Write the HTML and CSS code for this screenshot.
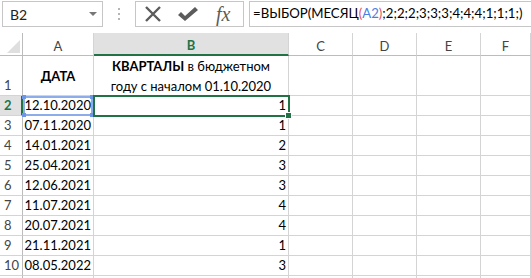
FILE: index.html
```html
<!DOCTYPE html>
<html>
<head>
  <meta charset="UTF-8">
  <link rel="stylesheet" href="styles.css">
  <title>ВЫБОР МЕСЯЦ</title>
</head>
<body>
<div class="fbar">
  <div class="namebox"><span>B2</span><span class="dd"></span></div>
  <div class="dots"><i></i><i></i><i></i></div>
  <div class="btns">
    <svg class="ico" width="18" height="18" viewBox="0 0 18 18"><path d="M2 2 L16 16 M16 2 L2 16" stroke="#5c5c5c" stroke-width="2.4" fill="none"/></svg>
    <svg class="ico" width="22" height="18" viewBox="0 0 22 18"><path d="M1 10 L4 7 L8 11 L18 2 L21 5 L8 16 Z" fill="#5c5c5c"/></svg>
    <span class="fx">fx</span>
  </div>
  <div class="formula">=ВЫБОР(МЕСЯЦ<span class="par">(</span><span class="ref">A2</span><span class="par">)</span>;2;2;2;3;3;3;4;4;4;1;1;1;)</div>
</div>

<div class="sheet">
  <div class="corner"><span class="tri"></span></div>
  <div class="ch">A</div>
  <div class="ch sel">B</div>
  <div class="ch">C</div>
  <div class="ch">D</div>
  <div class="ch">E</div>
  <div class="ch">F</div>

  <div class="rh r1">1</div>
  <div class="c hd"><span><b>ДАТА</b></span></div>
  <div class="c hd"><span><b>КВАРТАЛЫ</b> в бюджетном<br>году с началом 01.10.2020</span></div>
  <div class="c"></div><div class="c"></div><div class="c"></div><div class="c"></div>

  <div class="rh sel">2</div>
  <div class="c num">12.10.2020</div><div class="c num">1</div>
  <div class="c"></div><div class="c"></div><div class="c"></div><div class="c"></div>

  <div class="rh">3</div>
  <div class="c num">07.11.2020</div><div class="c num">1</div>
  <div class="c"></div><div class="c"></div><div class="c"></div><div class="c"></div>

  <div class="rh">4</div>
  <div class="c num">14.01.2021</div><div class="c num">2</div>
  <div class="c"></div><div class="c"></div><div class="c"></div><div class="c"></div>

  <div class="rh">5</div>
  <div class="c num">25.04.2021</div><div class="c num">3</div>
  <div class="c"></div><div class="c"></div><div class="c"></div><div class="c"></div>

  <div class="rh">6</div>
  <div class="c num">12.06.2021</div><div class="c num">3</div>
  <div class="c"></div><div class="c"></div><div class="c"></div><div class="c"></div>

  <div class="rh">7</div>
  <div class="c num">11.07.2021</div><div class="c num">4</div>
  <div class="c"></div><div class="c"></div><div class="c"></div><div class="c"></div>

  <div class="rh">8</div>
  <div class="c num">20.07.2021</div><div class="c num">4</div>
  <div class="c"></div><div class="c"></div><div class="c"></div><div class="c"></div>

  <div class="rh">9</div>
  <div class="c num">21.11.2021</div><div class="c num">1</div>
  <div class="c"></div><div class="c"></div><div class="c"></div><div class="c"></div>

  <div class="rh">10</div>
  <div class="c num">08.05.2022</div><div class="c num">3</div>
  <div class="c"></div><div class="c"></div><div class="c"></div><div class="c"></div>

  <div class="rh"></div>
  <div class="c"></div><div class="c"></div>
  <div class="c"></div><div class="c"></div><div class="c"></div><div class="c"></div>

  <!-- selection marks over the grid -->
  <div class="refbox"><i class="h1"></i><i class="h2"></i><i class="h3"></i><i class="h4"></i></div>
  <div class="cursor"><i class="fill"></i></div>
</div>
</body>
</html>
```

FILE: styles.css
```css
body {
  margin: 0;
  background: #fff;
  font-family: Lato, "Liberation Sans", sans-serif;
  font-size: 13px;
  color: #000;
  width: 531px;
  height: 278px;
  overflow: hidden;
}

/* formula bar */
.fbar {
  display: flex;
  align-items: flex-start;
  height: 33px;
  padding-top: 1px;
  box-sizing: border-box;
}
.namebox {
  margin-left: 2px;
  width: 101px;
  height: 26px;
  border: 1px solid #c6c6c6;
  box-sizing: border-box;
  display: flex;
  align-items: center;
  justify-content: space-between;
  padding: 0 5px 0 7px;
  font-size: 14px;
  color: #222;
}
.dd {
  width: 0;
  height: 0;
  border-left: 4px solid transparent;
  border-right: 4px solid transparent;
  border-top: 4px solid #777;
}
.dots {
  width: 32px;
  height: 26px;
  display: flex;
  flex-direction: column;
  align-items: center;
  justify-content: center;
  gap: 3px;
}
.dots i {
  width: 2px;
  height: 2px;
  background: #b5b5b5;
}
.btns {
  width: 109px;
  height: 26px;
  border: 1px solid #c6c6c6;
  box-sizing: border-box;
  display: flex;
  align-items: center;
  gap: 15px;
  padding-left: 8px;
}
.fx {
  font-family: "Liberation Serif", serif;
  font-style: italic;
  font-size: 20px;
  color: #5c5c5c;
  margin-left: 2px;
}
.formula {
  margin-left: 5px;
  flex: 1;
  height: 26px;
  border: 1px solid #c6c6c6;
  border-right: none;
  box-sizing: border-box;
  padding-left: 3px;
  line-height: 23px;
  font-size: 13.2px;
  white-space: nowrap;
  overflow: hidden;
}
.par { color: #e0506a; }
.ref { color: #4a7fe0; }

/* grid */
.sheet {
  position: relative;
  display: grid;
  grid-template-columns: 23px 71px 195px 64px 64px 64px 1fr;
  grid-template-rows: 23px 40px repeat(10, 20px) 20px;
}
.sheet > div {
  box-sizing: border-box;
  border-right: 1px solid #d4d4d4;
  border-bottom: 1px solid #d4d4d4;
}
.corner {
  position: relative;
  border-right-color: #bcbcbc !important;
  border-bottom-color: #bcbcbc !important;
}
.tri {
  position: absolute;
  right: 2px;
  bottom: 2px;
  width: 0;
  height: 0;
  border-left: 13px solid transparent;
  border-bottom: 13px solid #dfdfdf;
}
.ch {
  text-align: center;
  color: #444;
  line-height: 22px;
  padding-top: 2px;
  border-bottom-color: #bcbcbc !important;
}
.ch.sel {
  background: #e1e1e1;
  color: #217346;
  font-weight: bold;
  border-bottom: 2px solid #217346 !important;
  line-height: 20px;
}
.rh {
  color: #444;
  padding-left: 4px;
  line-height: 19px;
  border-right-color: #bcbcbc !important;
}
.rh.r1 {
  display: flex;
  align-items: flex-end;
}
.rh.sel {
  background: #e1e1e1;
  color: #217346;
  font-weight: bold;
  border-right: 2px solid #217346 !important;
}
.c {
  line-height: 19px;
  white-space: nowrap;
}
.num {
  text-align: right;
  padding-right: 2px;
}
.hd {
  display: flex;
  align-items: center;
  justify-content: center;
  text-align: center;
  line-height: 20px;
}

/* A2 reference highlight */
.refbox {
  position: absolute;
  left: 23px;
  top: 63px;
  width: 70px;
  height: 20px;
  border: 2px solid #8cadea !important;
  box-sizing: border-box;
}
.refbox i {
  position: absolute;
  width: 4px;
  height: 4px;
  background: #6d97e4;
}
.refbox .h1 { left: -3px; top: -3px; }
.refbox .h2 { right: -3px; top: -3px; }
.refbox .h3 { left: -3px; bottom: -3px; }
.refbox .h4 { right: -3px; bottom: -3px; }

/* active cell B2 */
.cursor {
  position: absolute;
  left: 93px;
  top: 62px;
  width: 197px;
  height: 22px;
  border: 2px solid #217346 !important;
  box-sizing: border-box;
}
.fill {
  position: absolute;
  right: -4px;
  bottom: -4px;
  width: 5px;
  height: 5px;
  background: #217346;
  border: 1px solid #fff;
}
```
